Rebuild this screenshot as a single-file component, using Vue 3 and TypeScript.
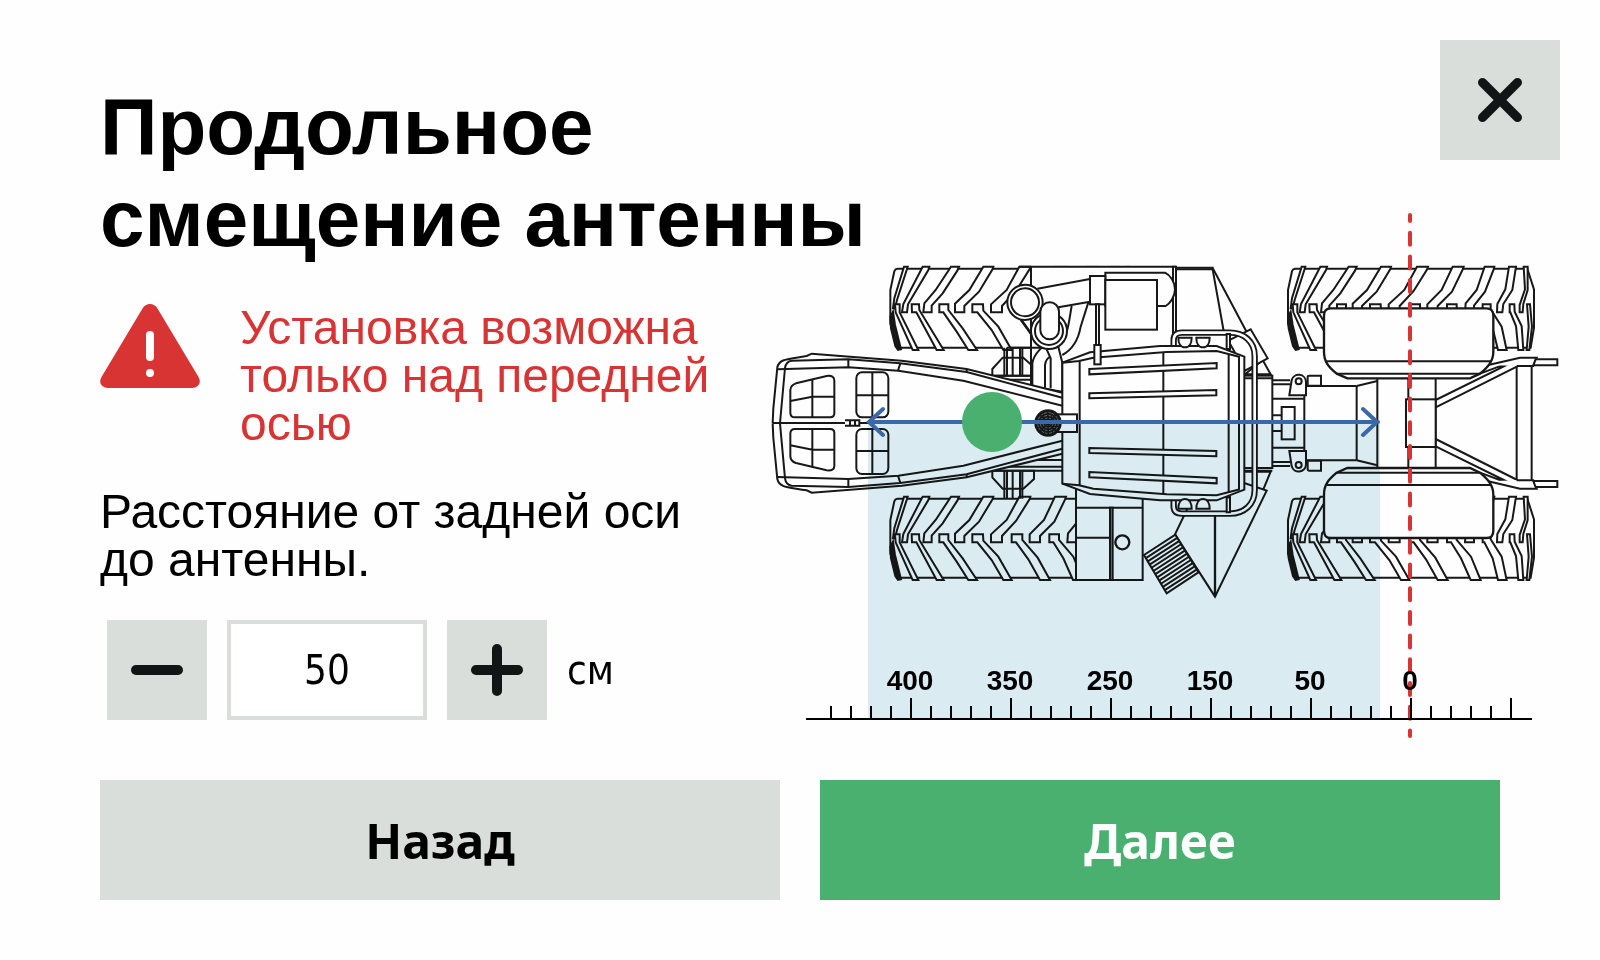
<script setup lang="ts">
import { ref } from 'vue'

interface Tick {
  x: number
  top: number
}

interface RulerLabel {
  x: number
  text: string
}

const offset = ref<string>('50')

function change(step: number): void {
  const current = Number.parseInt(offset.value, 10) || 0
  offset.value = String(Math.max(0, current + step))
}

const ticks: Tick[] = Array.from({ length: 35 }, (_, i) => ({
  x: 831 + i * 20,
  top: i % 5 === 4 ? 698 : 706,
})).filter((t) => t.x <= 1511)

const labels: RulerLabel[] = ['400', '350', '250', '150', '50', '0'].map((text, i) => ({
  x: 910 + i * 100,
  text,
}))

const tyres: string[] = [
  'translate(0 0)',
  'translate(0 690)',
  'translate(1193 0)',
  'translate(1193 690)',
]

const treads: string[] = [
  'M432 50H443L440 60L411 150L405 175H399L403 145Z',
  'M488 50H508L505 60L444 163L441 187H426L430 162Z',
  'M573 50H597L592 62L548 130L515 167V187H490L493 160L527 120Z',
  'M670 50H700L698 57L657 125L613 168V187H585V161L628 120Z',
  'M778 50H811L809 57L768 123L726 168V187H693V163L740 120Z',
  'M885 50H918L916 57L883 125L840 168V187H809V163L852 120Z',
  'M981 50H1010L1008 58L982 125L949 167V187H922L924 160L957 120Z',
  'M1054 50H1075L1064 120L1037 162L1034 187H1018L1019 162L1043 118Z',
  'M1098 50H1110V120L1097 162L1095 187H1086V165L1102 118Z',
  'M405 163H419V187L475 300H458L407 187Z',
  'M455 163H477L478 180L551 300H530L469 187H456Z',
  'M538 163H565V180L608 235L651 300H625L590 245L550 187H538Z',
  'M637 163H669L670 182L715 230L755 300H730L695 240L652 187H637Z',
  'M755 163H787V180L833 233L870 300H840L805 238L768 187H755Z',
  'M868 163H897V180L940 230L969 300H939L910 235L880 187H868Z',
  'M975 163H999V178L1032 230L1047 300H1021L1005 235L980 187H975Z',
  'M1056 163H1070L1071 185L1092 228L1097 300H1082L1075 228L1058 187H1056Z',
  'M1108 163H1117L1123 230L1115 300H1107L1113 230Z',
]

// Ribs of the folded ladder beside the front right wheel
const ribs: string[] = Array.from({ length: 11 }, (_, i) => {
  const t = (i + 1) / 12
  const x1 = 1152 + 68 * t
  const y1 = 915 + 115 * t
  return `M${x1} ${y1}l94 -61`
})
</script>

<template>
  <main class="dialog">
    <header class="head">
      <h1 class="title">Продольное<br />смещение антенны</h1>
      <button class="close" type="button" aria-label="Закрыть">
        <svg viewBox="0 0 120 120" aria-hidden="true">
          <path d="M42.500 42.500L77.500 77.500M77.500 42.500L42.500 77.500" />
        </svg>
      </button>
    </header>

    <div class="body">
      <section class="settings">
        <div class="warning" role="alert">
          <svg class="warning-icon" viewBox="0 0 100 84" aria-hidden="true">
            <path
              class="sign"
              d="M42.500 4.500C45.500-1.500 54.500-1.500 57.500 4.500L98.500 73C102 79 98 84 92 84H8C2 84-2 79 1.500 73Z"
            />
            <path class="mark" d="M50 31V53" />
            <circle class="dot" cx="50" cy="69" r="4" />
          </svg>
          <p class="text">Установка возможна только над передней осью</p>
        </div>
        <label class="text caption" for="offset">Расстояние от задней оси<br />до антенны.</label>
        <div class="stepper">
          <button class="step" type="button" aria-label="Уменьшить" @click="change(-1)">
            <svg viewBox="0 0 100 100" aria-hidden="true"><path d="M29 50H71" /></svg>
          </button>
          <input id="offset" v-model="offset" class="value" type="text" inputmode="numeric" />
          <button class="step" type="button" aria-label="Увеличить" @click="change(1)">
            <svg viewBox="0 0 100 100" aria-hidden="true"><path d="M29 50H71M50 29V71" /></svg>
          </button>
          <span class="unit">см</span>
        </div>
      </section>

      <svg class="diagram" viewBox="770 205 790 535" role="img" aria-label="Трактор, вид сверху">
        <defs>
          <g id="tyre">
            <path d="M412 56H1109L1129 118V233L1119 293H412L391 220V120L403 64Q405 57 412 56Z" />
            <path v-for="d in treads" :key="d" :d="d" />
            <path class="ink" d="M391 200L399 185L405 225L423 298L414 300L406 288L393 235Z" />
          </g>

          <g id="axle">
            <path d="M728 323H790L822 352V377H697V357Z" />
            <path d="M733 293V377M741 293V377M758 293V377M780 293V377M787 293V377" />
            <path d="M700 377H907M730 389H907M800 409H907" />
          </g>

          <g id="nose">
            <path
              class="blank"
              d="M38 520L52 352C58 325 85 328 140 318L155 311L425 332L620 357L907 428V520Z"
            />
            <path
              class="open"
              d="M38 519L40 475L52 352C58 325 85 328 140 318L155 311L425 332L620 357L907 428"
            />
            <path class="open" d="M60 519L75 354Q78 334 95 332L265 328L420 340L620 366L907 443" />
            <path class="open" d="M52 358L265 352L415 362L610 392L907 467" />
            <path class="open" d="M265 328V352M421 340L414 362M620 357V366" />
            <path
              d="M108 400L200 378Q223 375 223 392V490Q223 502 210 502H105Q91 502 91 488V420Q92 405 108 400Z"
            />
            <path class="open" d="M157 389V502M91 453L157 440H223" />
            <rect x="289" y="367" width="96" height="135" rx="17" />
            <path class="open" d="M337 367V502M289 436H385" />
          </g>

          <g id="roof">
            <path class="open" d="M907 338L957 333L1000 323L1220 306L1370 303L1440 321" />
            <path d="M988 357L1370 339V355L988 373Z" />
            <path d="M988 430L1369 420V436L988 445Z" />
          </g>

          <g id="rail">
            <path class="tube" d="M1241 286V270Q1241 248 1266 248H1410C1452 248 1484 275 1484 318V520" />
            <path class="tube-core" d="M1241 288V270Q1241 248 1266 248H1410C1452 248 1484 275 1484 318V520" />
            <path d="M1400 252H1410V298L1400 296Z" />
          </g>

          <g id="lamps">
            <path d="M1255 263H1295C1295 280 1288 292 1275 292C1262 292 1255 280 1255 263Z" />
            <path d="M1309 263H1349C1349 280 1342 292 1329 292C1316 292 1309 280 1309 263Z" />
          </g>

          <g id="rear">
            <path class="open" d="M1537 391H1590M1537 403H1590M1537 446H1633M1537 496H1565" />
            <path d="M1595 390A22 22 0 0 1 1638 395V436H1588Z" />
            <circle cx="1616" cy="394" r="9" />
            <path d="M1643 407V381Q1643 377 1648 377H1683V407Z" />
            <path class="open" d="M1790 408L1852 393" />
            <path class="open" d="M2027 450L2280 325M2027 472L2272 349M2160 371L2275 328" />
            <path d="M2185 345L2280 323H2330L2320 348H2270" />
            <path d="M2327 328H2392V346H2320Z" />
            <path
              class="bold"
              d="M1692 197Q1692 175 1712 175H2180Q2200 175 2200 197V305C2200 333 2185 350 2160 371L2130 385H1762L1730 371C1705 350 1692 335 1692 305Z"
            />
            <path class="open" d="M1700 334H2193M1730 371H2160" />
          </g>
        </defs>

        <g class="machine" transform="translate(760 250) scale(.33333)">
          <use v-for="t in tyres" :key="t" href="#tyre" :transform="t" />
          <use href="#axle" />
          <use href="#axle" transform="matrix(1 0 0 -1 0 1039)" />

          <!-- Engine bay with intake pipes -->
          <path class="blank" d="M813 46H1247V430H907L813 405Z" />
          <path class="open" d="M813 405V50M778 50H1248M740 293H850" />
          <path d="M1239 50H1248V260H1239Z" />
          <path d="M1248 58H1360L1462 250H1248Z" />
          <path class="open" d="M1248 53H1358V58L1391 243" />
          <path class="open" d="M832 116L990 87M895 172L990 155M782 210L820 262" />
          <path class="open" d="M935 168C925 225 925 245 905 275M985 157L962 230C955 270 935 300 907 315" />
          <path d="M1036 68H1215C1230 75 1245 95 1245 118C1245 140 1230 160 1217 168H1036Z" />
          <rect x="990" y="78" width="46" height="85" />
          <rect x="1036" y="90" width="155" height="149" />
          <path d="M1008 163H1017V285H1008Z" />
          <circle cx="795" cy="157" r="53" />
          <circle cx="795" cy="157" r="42" />
          <path d="M817 410V340C820 315 835 305 847 290H895L907 338V425Z" />
          <path class="open" d="M860 298L872 325V415M855 413V345Q858 325 872 320" />
          <circle cx="867" cy="243" r="54" />
          <circle cx="867" cy="243" r="42" />
          <rect x="841" y="157" width="56" height="111" rx="28" />

          <!-- Tank, ladder and mirror on the right side -->
          <path class="blank" d="M945 700H1152V994H945Z" />
          <rect x="948" y="700" width="200" height="290" />
          <path class="open" d="M948 773H1148M948 863H1050" />
          <rect class="shade" x="1050" y="773" width="8" height="217" />
          <circle class="bold" cx="1087" cy="877" r="21" />
          <path d="M1450 665H1532L1505 730" />
          <path d="M1365 1040L1245 853L1290 760V700H1455L1520 722Z" />
          <path class="bold" d="M1365 790V1040" />
          <path d="M1152 915L1246 854L1315 967L1220 1030Z" />
          <path v-for="d in ribs" :key="d" class="open" :d="d" />
          <path d="M1508 330L1532 373H1455Z" />
          <path d="M1405 272L1472 238L1523 325L1455 362Z" />

          <!-- Bonnet -->
          <use href="#nose" />
          <use href="#nose" transform="matrix(1 0 0 -1 0 1039)" />
          <path class="open" d="M38 519H255M298 519H330M255 511H298V527H255M270 511V527M285 511V527" />

          <!-- Cab -->
          <rect x="1452" y="377" width="85" height="277" />
          <path class="open" d="M1452 385H1537M1452 662H1537" />
          <use href="#rail" />
          <use href="#rail" transform="matrix(1 0 0 -1 0 1039)" />
          <path
            d="M907 338L990 307L1200 288H1370L1453 320V719L1370 751H1200L990 732L907 701Z"
          />
          <path class="open" d="M959 334V705M1210 307V732M1406 313V726M1437 321V718" />
          <use href="#roof" />
          <use href="#roof" transform="matrix(1 0 0 -1 0 1039)" />
          <use href="#lamps" />
          <use href="#lamps" transform="matrix(1 0 0 -1 0 1039)" />
          <rect x="1003" y="285" width="19" height="58" />
          <rect x="880" y="493" width="71" height="53" />
          <circle class="ink" cx="864" cy="519" r="38" />
          <circle class="mesh" cx="864" cy="519" r="31" />
          <circle class="mesh" cx="864" cy="519" r="23" />
          <circle class="mesh" cx="864" cy="519" r="15" />
          <circle class="mesh" cx="864" cy="519" r="8" />
          <path class="cross" d="M826 519H902M864 481V557M838 492L890 546M838 546L890 492" />

          <!-- Rear axle, fenders and hitch -->
          <path class="blank" d="M1852 386H2027V652H1852Z" />
          <rect x="1565" y="471" width="39" height="97" />
          <path class="open" d="M1633 408V631M1790 408V631M1852 386V652M1945 386V652M2027 386V652" />
          <path class="open" d="M1638 408H1790M1638 631H1790" />
          <rect x="1938" y="448" width="89" height="143" />
          <path class="open" d="M2270 348V691M2315 348V691" />
          <use href="#rear" />
          <use href="#rear" transform="matrix(1 0 0 -1 0 1039)" />
        </g>

        <rect class="zone" x="868" y="422" width="512" height="296" />
        <path class="axis" d="M1410 215V736" />
        <path class="range" d="M869 422H1378M883 409L869 422L883 435M1363 409L1377 422L1363 435" />
        <circle class="antenna" cx="992" cy="422" r="30" />

        <path class="ruler" d="M806 719H1532" />
        <path v-for="t in ticks" :key="t.x" class="ruler" :d="`M${t.x} ${t.top}V719`" />
        <text v-for="l in labels" :key="l.x" class="label" :x="l.x" y="690">{{ l.text }}</text>
      </svg>
    </div>

    <footer class="actions">
      <button class="action back" type="button">Назад</button>
      <button class="action next" type="button">Далее</button>
    </footer>
  </main>
</template>

<style>
body {
  margin: 0;
  background: #fefefe;
}
</style>

<style scoped>
.dialog {
  box-sizing: border-box;
  min-height: 100vh;
  padding: 40px 40px 60px 100px;
  background: #fefefe;
  color: #000;
  font-family: "Liberation Sans", Arial, sans-serif;
}

button {
  border: 0;
  border-radius: 0;
  padding: 0;
  background: #d9dedb;
  color: #000;
  cursor: pointer;
}

.head {
  display: flex;
  justify-content: space-between;
  align-items: flex-start;
}

.title {
  margin: 41px 0 0;
  font-size: 80px;
  line-height: 92px;
  font-weight: 700;
  white-space: nowrap;
}

.close {
  width: 120px;
  height: 120px;
}

.close svg,
.step svg {
  display: block;
  width: 100%;
  fill: none;
  stroke: #111516;
  stroke-linecap: round;
}

.close svg {
  stroke-width: 9;
}

.step svg {
  stroke-width: 10;
}

.body {
  display: grid;
  grid-template-columns: 670fr 790fr;
  align-items: start;
}

.settings {
  padding-top: 39px;
}

.warning {
  display: grid;
  grid-template-columns: 100px minmax(0, 500px);
  gap: 40px;
  color: #d93434;
}

.warning-icon {
  width: 100px;
  height: 84px;
}

.sign {
  fill: #d93434;
}

.mark {
  stroke: #fff;
  stroke-width: 8;
  stroke-linecap: round;
}

.dot {
  fill: #fff;
}

.text {
  margin: 0;
  font-size: 48px;
  line-height: 48px;
}

.caption {
  display: block;
  margin-top: 40px;
}

.stepper {
  display: flex;
  align-items: center;
  gap: 20px;
  margin: 36px 0 0 7px;
  font-family: "DejaVu Sans Condensed", "Noto Sans", sans-serif;
  font-size: 40px;
}

.step {
  width: 100px;
  height: 100px;
}

.value {
  box-sizing: border-box;
  width: 200px;
  height: 100px;
  border: 4px solid #d9dedb;
  border-radius: 0;
  padding: 0;
  background: #fff;
  color: #000;
  font: inherit;
  text-align: center;
}

.diagram {
  display: block;
  width: 100%;
  margin-top: -60px;
}

.machine {
  fill: #fefefe;
  stroke: #171817;
  stroke-width: 6;
}

.open {
  fill: none;
}

.blank {
  stroke: none;
}

.bold {
  stroke-width: 7;
}

.ink {
  fill: #171817;
}

.shade {
  fill: #8d9698;
}

.mesh {
  fill: none;
  stroke: #9a9c9b;
  stroke-width: 2;
  stroke-dasharray: 9 3;
}

.cross {
  fill: none;
  stroke-width: 4;
}

.tube {
  fill: none;
  stroke-width: 19;
}

.tube-core {
  fill: none;
  stroke: #fefefe;
  stroke-width: 8;
}

.zone {
  fill: #dbecf3;
  mix-blend-mode: multiply;
}

.axis {
  fill: none;
  stroke: #d93434;
  stroke-width: 4;
  stroke-linecap: round;
  stroke-dasharray: 12 11.700;
  stroke-dashoffset: 6;
}

.range {
  fill: none;
  stroke: #3a68a8;
  stroke-width: 4;
  stroke-linecap: round;
}

.antenna {
  fill: #49b06f;
}

.ruler {
  stroke: #000;
  stroke-width: 2;
}

.label {
  fill: #000;
  font-size: 28px;
  font-weight: 700;
  text-anchor: middle;
}

.actions {
  display: grid;
  grid-template-columns: 1fr 1fr;
  gap: 40px;
  margin: 40px 60px 0 0;
}

.action {
  height: 120px;
  font-family: "Noto Sans", sans-serif;
  font-size: 48px;
  font-weight: 700;
}

.next {
  background: #49b06f;
  color: #fff;
}
</style>
